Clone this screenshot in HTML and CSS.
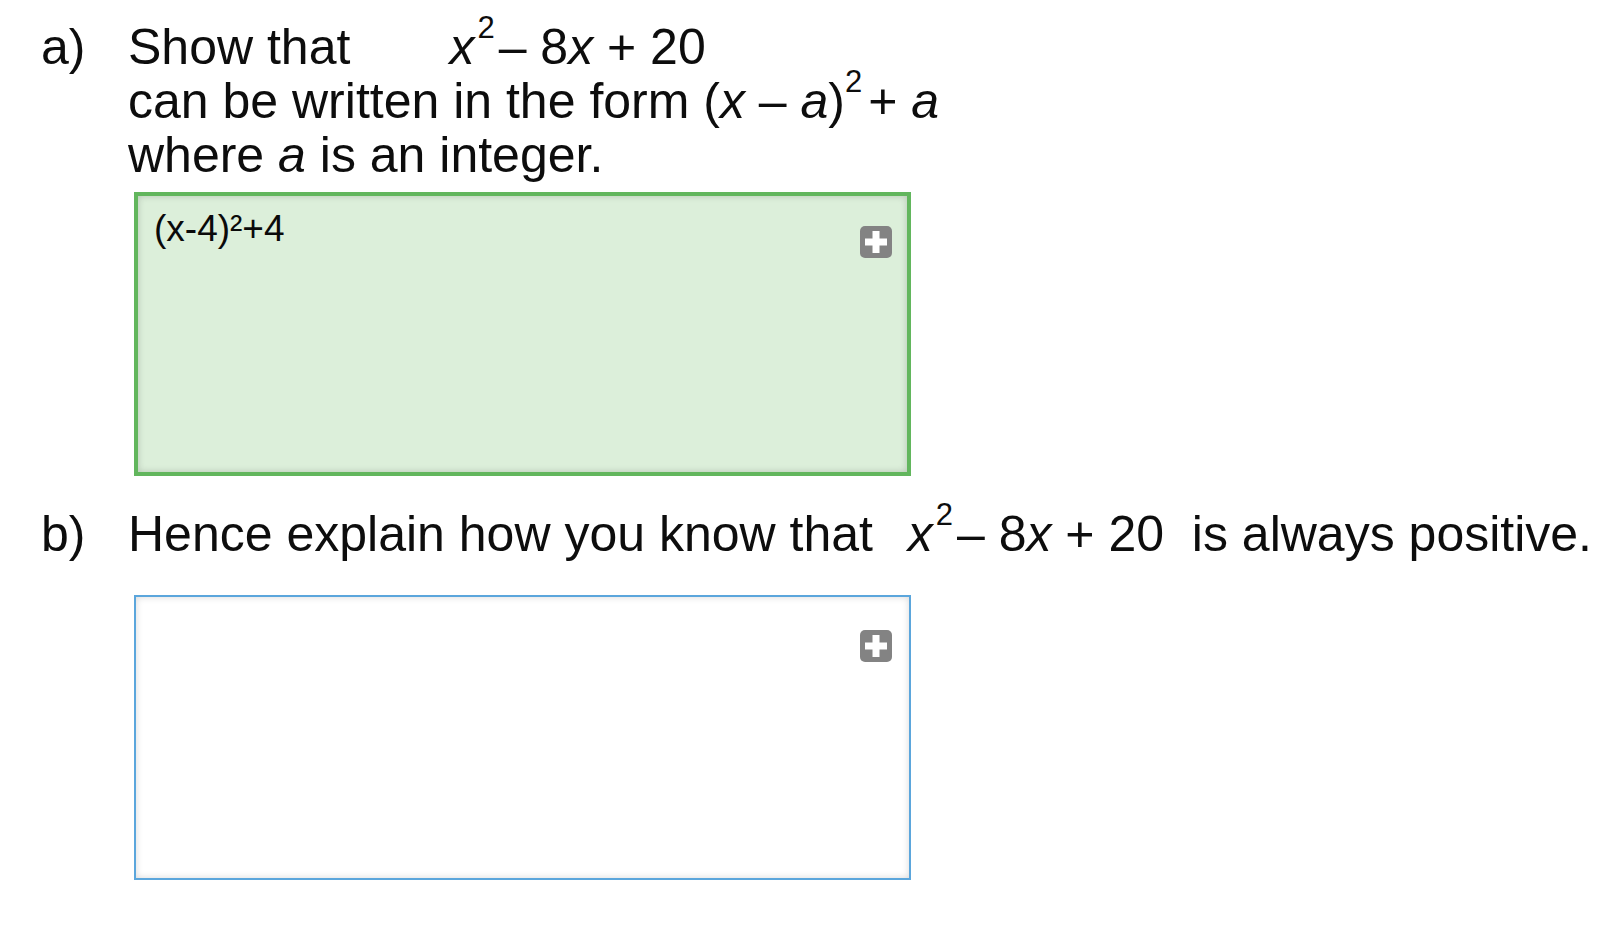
FILE: index.html
```html
<!DOCTYPE html>
<html lang="en">
<head>
<meta charset="utf-8">
<title>Completing the square</title>
<link rel="stylesheet" href="styles.css">
</head>
<body>
<main class="worksheet">
  <section class="part">
    <span class="label">a)</span>
    <div class="part-body">
      <p class="prompt">Show that<span class="math math-lead"><i>x</i><sup>2</sup>– 8<i>x</i> + 20</span><br>can be written in the form (<i>x</i> – <i>a</i>)<sup class="sup-wide">2</sup>+ <i>a</i><br>where <i>a</i> is an integer.</p>
      <div class="answer answer-correct">
        <div class="answer-text">(x-4)²+4</div>
        <span class="add-btn"><svg width="32" height="32" viewBox="0 0 32 32"><rect x="0" y="0" width="32" height="32" rx="5" fill="#838383"/><rect x="5" y="12.5" width="22" height="7" fill="#fff"/><rect x="12.5" y="5" width="7" height="22" fill="#fff"/></svg></span>
      </div>
    </div>
  </section>
  <section class="part part-b">
    <span class="label">b)</span>
    <div class="part-body">
      <p class="prompt">Hence explain how you know that&nbsp;&nbsp;<span class="math math-inline"><i>x</i><sup>2</sup>– 8<i>x</i> + 20</span>&nbsp;&nbsp;is always positive.</p>
      <div class="answer answer-open">
        <div class="answer-text"></div>
        <span class="add-btn"><svg width="32" height="32" viewBox="0 0 32 32"><rect x="0" y="0" width="32" height="32" rx="5" fill="#838383"/><rect x="5" y="12.5" width="22" height="7" fill="#fff"/><rect x="12.5" y="5" width="7" height="22" fill="#fff"/></svg></span>
      </div>
    </div>
  </section>
</main>
</body>
</html>
```
FILE: styles.css
```css
html, body {
  margin: 0;
  padding: 0;
  background: #ffffff;
}

body {
  font-family: "Liberation Sans", Arial, Helvetica, sans-serif;
  color: #0d0d0d;
}

.worksheet {
  padding: 20px 0 0 41px;
}

.part {
  display: flex;
  align-items: flex-start;
}

.part-b {
  margin-top: 31px;
}

.label {
  flex: 0 0 87px;
  font-size: 50px;
  line-height: 54px;
}

.part-body {
  display: flex;
  flex-direction: column;
}

.prompt {
  margin: 0;
  font-size: 50px;
  line-height: 54px;
  white-space: nowrap;
}

.prompt i {
  font-style: italic;
}

.math-lead {
  margin-left: 99px;
}

.math-inline {
  margin-left: 7px;
}

.prompt sup {
  font-size: 31px;
  line-height: 0;
  vertical-align: 26px;
  margin-left: 3px;
  margin-right: 4px;
}

.prompt .sup-wide {
  margin-left: 0;
  margin-right: 6px;
}

.answer {
  box-sizing: border-box;
  width: 777px;
  margin-left: 6px;
  display: flex;
  align-items: flex-start;
}

.answer-correct {
  margin-top: 10px;
  height: 284px;
  border: 4px solid #62b65d;
  background: #dcefda;
  box-shadow: inset 0 0 7px rgba(0, 0, 0, 0.18);
  padding: 12px 15px 0 16px;
}

.answer-open {
  margin-top: 34px;
  height: 285px;
  border: 2px solid #5ba6dc;
  background: #ffffff;
  box-shadow: inset 0 0 7px rgba(0, 0, 0, 0.16);
  padding: 15px 17px 0 18px;
}

.answer-text {
  flex: 1;
  font-family: "Liberation Sans", Arial, Helvetica, sans-serif;
  font-size: 37px;
  line-height: 42px;
  color: #0a0a0a;
}

.add-btn {
  display: block;
  width: 32px;
  height: 32px;
  margin-top: 18px;
}

.add-btn svg {
  display: block;
}
```
